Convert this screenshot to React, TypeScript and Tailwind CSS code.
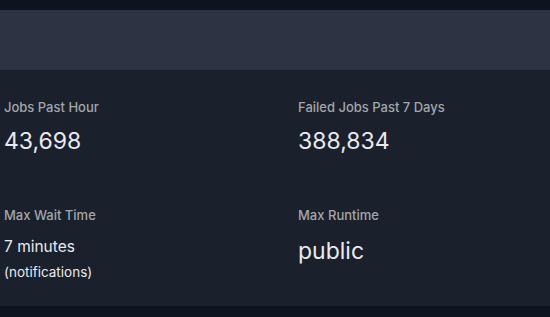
const stats = [
  { label: "Jobs Past Hour", value: "43,698" },
  { label: "Failed Jobs Past 7 Days", value: "388,834" },
];

export default function App() {
  return (
    <div className="w-[550px] h-[317px] overflow-hidden bg-[#0e1320] font-['Inter','Noto_Sans',sans-serif] flex flex-col">
      <div className="h-[10px] shrink-0" />
      <div className="h-[60px] shrink-0 bg-[#2d3343]" />
      <div className="h-[236px] shrink-0 bg-[#1a202c] pl-[4px]">
        <div className="grid grid-cols-[294px_1fr] pt-[27px]">
          {stats.map((s) => (
            <div key={s.label} className="h-[108px]">
              <div className="text-[13px] leading-[20px] font-medium text-[#a3a6ab]">{s.label}</div>
              <div className="mt-[9px] text-[23px] leading-[30px] text-[#e8eaee]">{s.value}</div>
            </div>
          ))}
          <div>
            <div className="text-[13px] leading-[20px] font-medium text-[#a3a6ab]">Max Wait Time</div>
            <div className="mt-[11px] text-[15.5px] leading-[22px] text-[#e8eaee]">7 minutes</div>
            <div className="mt-[3px] text-[13.5px] leading-[22px] text-[#e8eaee]">(notifications)</div>
          </div>
          <div>
            <div className="text-[13px] leading-[20px] font-medium text-[#a3a6ab]">Max Runtime</div>
            <div className="mt-[11px] text-[23px] leading-[30px] text-[#e8eaee]">public</div>
          </div>
        </div>
      </div>
      <div className="flex-1" />
    </div>
  );
}
